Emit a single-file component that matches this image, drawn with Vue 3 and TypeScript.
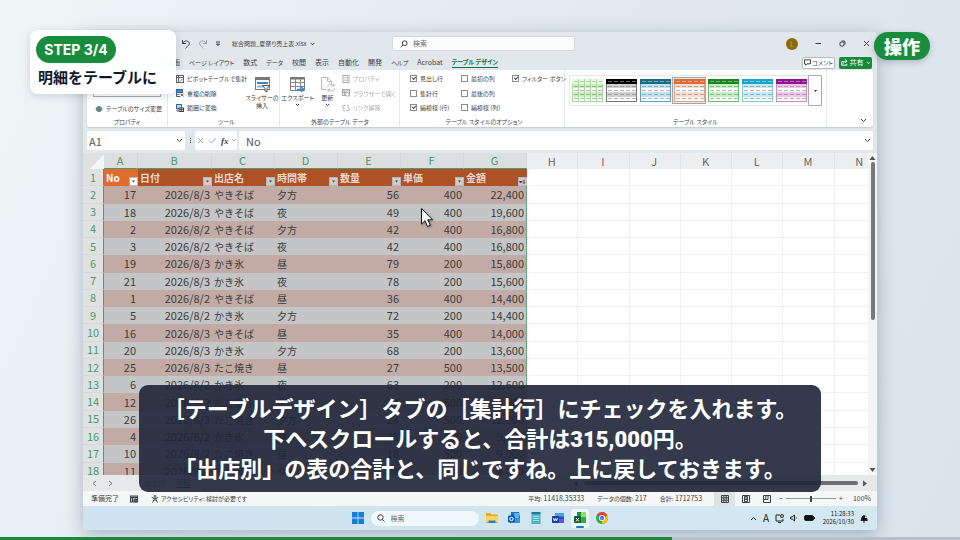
<script setup lang="ts">
import { ref } from 'vue'

interface Row {
  n: number
  no: number
  date: string
  shop: string
  slot: string
  qty: number
  price: number
  total: string
}

const tabs: { label: string; kana: boolean }[] = [
  { label: '描画', kana: false },
  { label: 'ページ レイアウト', kana: true },
  { label: '数式', kana: false },
  { label: 'データ', kana: true },
  { label: '校閲', kana: false },
  { label: '表示', kana: false },
  { label: '自動化', kana: false },
  { label: '開発', kana: false },
  { label: 'ヘルプ', kana: true },
  { label: 'Acrobat', kana: false },
]
const columns: string[] = ['A', 'B', 'C', 'D', 'E', 'F', 'G', 'H', 'I', 'J', 'K', 'L', 'M', 'N']
const headings: string[] = ['No', '日付', '出店名', '時間帯', '数量', '単価', '金額']
const emptyColumns: string[] = columns.slice(7)

const source: [number, string, string, string, number, number, string][] = [
  [17, '2026/8/3', 'やきそば', '夕方', 56, 400, '22,400'],
  [18, '2026/8/3', 'やきそば', '夜', 49, 400, '19,600'],
  [2, '2026/8/2', 'やきそば', '夕方', 42, 400, '16,800'],
  [3, '2026/8/2', 'やきそば', '夜', 42, 400, '16,800'],
  [19, '2026/8/3', 'かき氷', '昼', 79, 200, '15,800'],
  [21, '2026/8/3', 'かき氷', '夜', 78, 200, '15,600'],
  [1, '2026/8/2', 'やきそば', '昼', 36, 400, '14,400'],
  [5, '2026/8/2', 'かき氷', '夕方', 72, 200, '14,400'],
  [16, '2026/8/3', 'やきそば', '昼', 35, 400, '14,000'],
  [20, '2026/8/3', 'かき氷', '夕方', 68, 200, '13,600'],
  [25, '2026/8/3', 'たこ焼き', '昼', 27, 500, '13,500'],
  [6, '2026/8/2', 'かき氷', '夜', 63, 200, '12,600'],
  [12, '2026/8/2', 'たこ焼き', '夜', 24, 500, '12,000'],
  [26, '2026/8/3', 'たこ焼き', '夕方', 24, 500, '12,000'],
  [4, '2026/8/2', 'かき氷', '昼', 45, 200, '9,000'],
  [10, '2026/8/2', 'たこ焼き', '昼', 18, 500, '9,000'],
  [11, '2026/8/2', 'たこ焼き', '夕方', 18, 500, '9,000'],
]
const rows: Row[] = source.map(([no, date, shop, slot, qty, price, total], i) => ({
  n: i + 2, no, date, shop, slot, qty, price, total,
}))

const options = ref([
  { label: '見出し行', on: true },
  { label: '最初の列', on: false },
  { label: 'フィルター ボタン', on: true },
  { label: '集計行', on: false },
  { label: '最後の列', on: false },
  { label: '', on: false },
  { label: '縞模様 (行)', on: true },
  { label: '縞模様 (列)', on: false },
])

const swatches = [
  { name: '緑 淡色', head: '#e9f9e3', band: '#c9f0bd', line: '#a6d99a', grid: true, active: false },
  { name: '黒', head: '#000000', band: '#cfcfcf', line: '#777777', grid: false, active: false },
  { name: '青緑', head: '#1b6a86', band: '#bfe3ef', line: '#5d9fb5', grid: false, active: false },
  { name: 'オレンジ', head: '#dc6a34', band: '#f8dccf', line: '#dda68e', grid: false, active: true },
  { name: '緑', head: '#1d8221', band: '#bff0bf', line: '#6cbf6e', grid: false, active: false },
  { name: '水色', head: '#1ba5cc', band: '#c3eaf5', line: '#7fcbe0', grid: false, active: false },
  { name: '紫', head: '#92138f', band: '#ebc6ea', line: '#c98bc8', grid: false, active: false },
]

const cellName = ref('A1')
const formula = ref('No')
const query = ref('')
const taskQuery = ref('')
const zoom = ref(50)
</script>

<template>
  <main class="stage">
    <section class="window">
      <header class="titlebar">
        <div class="quick">
          <button aria-label="元に戻す"><svg width="10" height="10" viewBox="0 0 10 10"><path d="M1.5 1v3.5H5M1.5 4.5C3 2 6 1.200 7.700 2.900C9.500 4.800 7.500 6.500 4.500 9.300" /></svg></button>
          <button aria-label="やり直し" class="off"><svg width="10" height="10" viewBox="0 0 10 10"><path d="M8.500 1v3.500H5M8.500 4.500C7 2 4 1.200 2.300 2.900C.500 4.800 2.500 6.500 5.500 9.300" /></svg></button>
          <button aria-label="カスタマイズ"><svg width="6" height="6" viewBox="0 0 6 6"><path d="M1 1h4M1.500 3l1.500 1.700L4.500 3z" /></svg></button>
        </div>
        <button class="filename">総合問題_夏祭り売上表.xlsx <svg width="5" height="4" viewBox="0 0 5 4"><path d="M.5 .8l2 2 2-2" /></svg></button>
        <label class="search">
          <svg width="8" height="8" viewBox="0 0 8 8"><circle cx="4.700" cy="3.200" r="2.400" /><path d="M3 5L.7 7.300" /></svg>
          <input v-model="query" type="text" placeholder="検索" aria-label="検索">
        </label>
        <div class="controls">
          <span class="avatar">L</span>
          <button aria-label="最小化"><svg width="7" height="7" viewBox="0 0 7 7"><path d="M.5 3.500h5.500" /></svg></button>
          <button aria-label="元のサイズ"><svg width="7" height="7" viewBox="0 0 7 7"><rect x="1" y="2" width="4" height="4" rx="1" /><path d="M2.500 1h2.500q1 0 1 1v2.500" /></svg></button>
          <button aria-label="閉じる"><svg width="7" height="7" viewBox="0 0 7 7"><path d="M1 1l5 5M6 1L1 6" /></svg></button>
        </div>
      </header>

      <nav class="tabs">
        <button v-for="t in tabs" :key="t.label" :class="{ kana: t.kana }">{{ t.label }}</button>
        <button class="kana current">テーブル デザイン</button>
        <span class="share">
          <button class="comment"><svg width="7" height="7" viewBox="0 0 7 7"><path d="M.5 .8h6v4h-3.500L1.500 6.300V4.800h-1z" /></svg>コメント</button>
          <button class="sharing"><svg width="7" height="7" viewBox="0 0 7 7"><path d="M2.500 2.500H.8v3.700h5V4.800M2.500 4.500c.3-1.700 1.200-2.200 2.500-2.300M4.200 .7l1.900 1.500-1.900 1.600" /></svg>共有<svg width="5" height="4" viewBox="0 0 5 4"><path d="M1 1l1.500 1.500L4 1" /></svg></button>
        </span>
      </nav>

      <div class="ribbon">
        <section class="group g-prop">
          <div class="stack">
            <input class="tname" type="text" value="テーブル1" aria-label="テーブル名">
            <button class="cmd resize"><svg width="8" height="8" viewBox="0 0 8 8"><circle cx="4" cy="4" r="2.500" fill="#8fb3a4" stroke="#50756a" /><path d="M.5 4h7M4 1.500v5" stroke="#50756a" /></svg>テーブルのサイズ変更</button>
          </div>
          <h2>プロパティ</h2>
        </section>
        <section class="group g-tool">
          <div class="body">
            <div class="list">
              <button class="cmd"><svg width="8" height="8" viewBox="0 0 8 8"><rect x=".5" y=".5" width="7" height="7" fill="#fff" stroke="#666" /><path d="M.5 2.500h7M2.500 .5v7" stroke="#666" /><path d="M4 6.500l2.500-2.500" stroke="#2683c6" /></svg>ピボットテーブルで集計</button>
              <button class="cmd"><svg width="8" height="8" viewBox="0 0 8 8"><rect x=".5" y=".5" width="6" height="3" fill="#3d8fcc" stroke="#2c6d9e" /><path d="M.5 4v3.500h3.500M.5 5.500h3" stroke="#2c6d9e" /><path d="M4.500 4.500l3 3M7.500 4.500l-3 3" stroke="#d04a35" /></svg>重複の削除</button>
              <button class="cmd"><svg width="8" height="8" viewBox="0 0 8 8"><rect x=".5" y=".5" width="5" height="4" fill="#b7dbee" stroke="#2c6d9e" /><rect x="3" y="4" width="4.500" height="3.500" fill="#fff" stroke="#444" /><path d="M3 5.700h4.500M5.200 4v3.500M1 5.500v1.500h1" stroke="#444" /></svg>範囲に変換</button>
            </div>
            <button class="big"><svg width="17" height="17" viewBox="0 0 17 17"><rect x="1.500" y="1.500" width="14" height="12" fill="#fff" stroke="#777" /><path d="M1 3h15" stroke="#777" stroke-width="2" /><path d="M3 7h11" stroke="#2d8bd0" stroke-width="2" /><path d="M3 10.500h6" stroke="#7fbbe5" stroke-width="2" /><path d="M8.500 9.500h7l-2.500 3v3.500l-2-1v-2.500z" fill="#fff" stroke="#555" /></svg><span>スライサーの<br>挿入</span></button>
          </div>
          <h2>ツール</h2>
        </section>
        <section class="group g-ext">
          <div class="body">
            <button class="big"><svg width="17" height="17" viewBox="0 0 17 17"><path d="M1.500 1.500h14v13h-14z" fill="#fff" stroke="#777" /><path d="M1 2.500h15" stroke="#777" stroke-width="2" /><path d="M1 6.500h14M1 10.500h14M6.500 3v12M11.500 3v12" stroke="#888" /><path d="M8 13.500h6M12 11l3 2.500-3 2.500" stroke="#2d8bd0" stroke-width="1.500" /></svg>エクスポート<svg width="5" height="4" viewBox="0 0 5 4"><path d="M1 1l1.500 1.500L4 1" /></svg></button>
            <button class="big"><svg width="17" height="17" viewBox="0 0 17 17"><path d="M2.500 1.500h6l4 4v3M2.500 1v12.500h5M8.500 1.500v4h4" stroke="#bbb" fill="#f6f6f6" /><path d="M8.500 11a3.500 3.500 0 0 1 6.500-1M15.500 12a3.500 3.500 0 0 1-6.500 1.500M15 7.500V10h-2.500M9 16v-2.500h2.500" stroke="#bbb" /></svg>更新<svg width="5" height="4" viewBox="0 0 5 4"><path d="M1 1l1.500 1.500L4 1" /></svg></button>
            <div class="list off">
              <button class="cmd" disabled><svg width="8" height="8" viewBox="0 0 8 8"><rect x="1" y=".5" width="6" height="7" /><path d="M2.500 2.500h1M2.500 4h1M2.500 5.500h1M4.500 2.500h1.500M4.500 4h1.500M4.500 5.500h1.500" /></svg>プロパティ</button>
              <button class="cmd" disabled><svg width="8" height="8" viewBox="0 0 8 8"><rect x=".5" y=".5" width="7" height="6" /><path d="M.5 2h7M.5 3.500h4M2.500 2v4.500" /><circle cx="5.500" cy="5.500" r="1.800" fill="#fff" /></svg>ブラウザーで開く</button>
              <button class="cmd" disabled><svg width="8" height="8" viewBox="0 0 8 8"><path d="M3.500 1.500h-2l-1 1.500 1 1.500h1M4.500 6.500h2l1-1.500-1-1.500h-1M5 1l2 1M1 6l2 1" /></svg>リンク解除</button>
            </div>
          </div>
          <h2>外部のテーブル データ</h2>
        </section>
        <section class="group g-opt">
          <div class="checks">
            <template v-for="(o, i) in options" :key="i">
              <label v-if="o.label"><input v-model="o.on" type="checkbox">{{ o.label }}</label>
              <span v-else></span>
            </template>
          </div>
          <h2>テーブル スタイルのオプション</h2>
        </section>
        <section class="group g-style">
          <div class="gallery">
            <button v-for="s in swatches" :key="s.name" class="swatch" :class="{ active: s.active }" :aria-label="s.name">
              <svg width="31" height="23" viewBox="0 0 31 23">
                <rect width="31" height="23" fill="#fff" />
                <rect width="31" height="5" :fill="s.head" />
                <rect y="5" width="31" height="4" :fill="s.band" />
                <rect y="13" width="31" height="5" :fill="s.band" />
                <path v-if="s.grid" d="M6.500 0v23M12.500 0v23M18.500 0v23M24.500 0v23" :stroke="s.line" />
                <path d="M0 22.500h31M.5 5v18M30.500 5v18" :stroke="s.line" />
                <path d="M2 7.500h28M2 11.500h28M2 15.500h28M2 19.500h28" stroke="#777" stroke-dasharray="4 2" opacity=".55" />
                <path d="M2 2.500h28" :stroke="s.grid ? '#777' : '#fff'" stroke-dasharray="4 2" opacity=".4" />
              </svg>
            </button>
            <button class="more" aria-label="その他"><svg width="5" height="4" viewBox="0 0 5 4"><path d="M1.500 1.500h2L2.500 2.500z" /></svg></button>
          </div>
          <h2>テーブル スタイル</h2>
        </section>
        <button class="collapse" aria-label="リボンを折りたたむ"><svg width="7" height="5" viewBox="0 0 7 5"><path d="M1 1l2.500 2.500L6 1" /></svg></button>
      </div>

      <div class="formulabar">
        <label class="namebox"><input v-model="cellName" type="text" aria-label="名前ボックス"><svg width="7" height="5" viewBox="0 0 7 5"><path d="M1 1l2.500 2.500L6 1" /></svg></label>
        <span class="dots"><i></i><i></i><i></i></span>
        <span class="fx">
          <svg width="7" height="7" viewBox="0 0 7 7" class="dim"><path d="M1 1l5 5M6 1L1 6" /></svg>
          <svg width="9" height="7" viewBox="0 0 9 7" class="dim"><path d="M1 3.500L3.500 6 8 1" /></svg>
          <em>fx</em>
          <svg width="6" height="5" viewBox="0 0 6 5" class="dim"><path d="M1 1l2 2 2-2" /></svg>
        </span>
        <label class="formula"><input v-model="formula" type="text" aria-label="数式バー"><svg width="7" height="5" viewBox="0 0 7 5"><path d="M1 1l2.500 2.500L6 1" /></svg></label>
      </div>

      <div class="sheet">
        <div class="cells">
          <table>
            <colgroup>
              <col class="c-head"><col class="c-no"><col class="c-date">
              <col v-for="k in 5" :key="k" class="c-data">
              <col v-for="k in emptyColumns" :key="k" class="c-empty">
            </colgroup>
            <thead>
              <tr>
                <th class="corner"></th>
                <th v-for="(c, i) in columns" :key="c" class="colhead" :class="{ sel: i < 7 }">{{ c }}</th>
              </tr>
            </thead>
            <tbody>
              <tr class="heading">
                <th class="rowhead">1</th>
                <th v-for="(h, i) in headings" :key="h" class="field" :class="{ first: i === 0 }">
                  <div><span>{{ h }}</span><button :aria-label="h + 'のフィルター'"><svg width="7" height="7" viewBox="0 0 7 7"><path v-if="i < 6" d="M2 2.500h3L3.500 4.500z" fill="#444" stroke="none" /><path v-else d="M.5 3.500h2.500L1.700 5zM5 1.500v4M4 4.500l1 1 1-1" /></svg></button></div>
                </th>
                <td v-for="c in emptyColumns" :key="c" class="blank"></td>
              </tr>
              <tr v-for="r in rows" :key="r.n" :class="{ band: r.n % 2 === 0 }">
                <th class="rowhead">{{ r.n }}</th>
                <td class="num">{{ r.no }}</td>
                <td class="num">{{ r.date }}</td>
                <td>{{ r.shop }}</td>
                <td>{{ r.slot }}</td>
                <td class="num">{{ r.qty }}</td>
                <td class="num">{{ r.price }}</td>
                <td class="num last">{{ r.total }}</td>
                <td v-for="c in emptyColumns" :key="c" class="blank"></td>
              </tr>
            </tbody>
          </table>
        </div>
        <div class="vscroll">
          <svg width="7" height="6" viewBox="0 0 7 6"><path d="M.5 5h6L3.500 1z" /></svg>
          <i></i>
          <svg width="7" height="6" viewBox="0 0 7 6"><path d="M.5 1h6L3.500 5z" /></svg>
        </div>
      </div>

      <div class="sheetbar">
        <svg width="5" height="7" viewBox="0 0 5 7"><path d="M4 1L1 3.500 4 6" /></svg>
        <svg width="5" height="7" viewBox="0 0 5 7"><path d="M1 1l3 2.500L1 6" /></svg>
        <button>出店別</button>
        <button class="current">明細</button>
        <div class="hscroll">
          <svg width="6" height="7" viewBox="0 0 6 7"><path d="M5 .5v6L1 3.500z" /></svg>
          <i></i>
          <svg width="6" height="7" viewBox="0 0 6 7"><path d="M1 .5v6L5 3.500z" /></svg>
        </div>
      </div>

      <footer class="status">
        <span class="ready">準備完了</span>
        <svg width="8" height="8" viewBox="0 0 8 8"><rect x=".5" y="1" width="7" height="6" fill="#bbb" /><path d="M.5 2.500h7M2.500 2.500V7M4 5h3.500" /><circle cx="5.500" cy="5.500" r="1.500" fill="#666" /></svg>
        <span class="access"><svg width="8" height="8" viewBox="0 0 8 8"><circle cx="4" cy="1.200" r=".8" /><path d="M.8 2.500L3 3.200v1.600L1.500 7.500M7.200 2.500L5 3.200v1.600l1.500 2.700M3 3.200h2M3 5h2" /></svg>アクセシビリティ: 検討が必要です</span>
        <span class="sums"><span><small>平均:</small> 11418.35333</span><span><small>データの個数:</small> 217</span><span><small>合計:</small> 1712753</span></span>
        <span class="views">
          <button class="current" aria-label="標準"><svg width="8" height="8" viewBox="0 0 8 8"><path d="M.5 .5h7v7h-7zM.5 2.800h7M.5 5.200h7M2.800 .5v7M5.200 .5v7" /></svg></button>
          <button aria-label="ページ レイアウト"><svg width="8" height="8" viewBox="0 0 8 8"><path d="M.5 .5h7v7h-7zM2.500 1.500h3v5h-3zM3 3h2M3 4.500h2" /></svg></button>
          <button aria-label="改ページ プレビュー"><svg width="8" height="8" viewBox="0 0 8 8"><path d="M.5 .5h7v7h-7zM.5 4.500H5V.5M2.800 .5v4" /></svg></button>
        </span>
        <span class="zoom"><button aria-label="縮小">−</button><input v-model="zoom" type="range" aria-label="ズーム"><button aria-label="拡大">+</button></span>
        <span class="percent">100%</span>
      </footer>

      <div class="taskbar">
        <div class="apps">
          <button aria-label="スタート"><svg width="12" height="12" viewBox="0 0 12 12"><path d="M0 0h5.600v5.600H0zM6.400 0H12v5.600H6.400zM0 6.400h5.600V12H0zM6.400 6.400H12V12H6.400z" fill="#1680d8" stroke="none" /></svg></button>
          <label class="tasksearch"><svg width="8" height="8" viewBox="0 0 8 8"><circle cx="3.500" cy="3.500" r="2.700" /><path d="M5.500 5.500L7.500 7.500" /></svg><input v-model="taskQuery" type="text" placeholder="検索" aria-label="タスクバー検索"></label>
          <button class="app" aria-label="エクスプローラー"><svg width="12" height="12" viewBox="0 0 12 12"><path d="M0 1h4.500l1 1.500H12V11H0z" fill="#e9a81f" /><path d="M0 4h12v6H0z" fill="#fbd45c" /><path d="M2.500 8.500h7V11h-7z" fill="#2a7fd0" /></svg></button>
          <button class="app" aria-label="Outlook"><svg width="12" height="12" viewBox="0 0 12 12"><path d="M3 0h8l1 5v6H2z" fill="#1c6fc0" /><path d="M6 1h5v5H6z" fill="#57b7ee" /><path d="M3 7l9-1v5H3z" fill="#2d9be3" /><rect y="3.500" width="7" height="7" rx="1" fill="#0f5fae" /><circle cx="3.500" cy="7" r="1.700" fill="none" stroke="#fff" /></svg></button>
          <button class="app" aria-label="メモ帳"><svg width="12" height="12" viewBox="0 0 12 12"><path d="M1.500 1h9v11h-9z" fill="#49b4c4" /><path d="M1.500 0h9v2h-9z" fill="#25788e" /><path d="M3 4.500h6M3 6.500h6M3 8.500h6" stroke="#a5e3e8" /></svg></button>
          <button class="app" aria-label="Word"><svg width="12" height="12" viewBox="0 0 12 12"><path d="M3 1h9v10H3z" fill="#1c54c4" /><path d="M3 1h9v3.500H3z" fill="#4aa1f0" /><path d="M7 7h5v4H7z" fill="#6a4ee0" /><rect y="4" width="7" height="7" rx="1" fill="#123f9f" /><path d="M1.500 6l1 3 1-2.500 1 2.500 1-3" fill="none" stroke="#fff" /></svg></button>
          <button class="app running" aria-label="Excel"><svg width="12" height="12" viewBox="0 0 12 12"><path d="M3 0h9v11H3z" fill="#1d8d3f" /><path d="M7 0h5v5H7z" fill="#8fdc60" /><path d="M7 5h5v6H7z" fill="#2dac52" /><rect y="4" width="7" height="7" rx="1" fill="#0c6030" /><path d="M2 6l3 3.500M5 6L2 9.500" stroke="#fff" /></svg></button>
          <button class="app" aria-label="Chrome"><svg width="12" height="12" viewBox="0 0 12 12"><circle cx="6" cy="6" r="6" fill="#34a853" /><path d="M6 6L.8 3A6 6 0 0 1 11.200 3z" fill="#ea4335" /><path d="M6 6l5.200-3A6 6 0 0 1 6 12z" fill="#fbbc04" /><path d="M3.500 3h7.700l-2 2z" fill="#ea4335" /><circle cx="6" cy="6" r="2.900" fill="#fff" /><circle cx="6" cy="6" r="2.200" fill="#4285f4" /></svg></button>
        </div>
        <div class="tray">
          <svg width="7" height="5" viewBox="0 0 7 5"><path d="M1 4l2.500-2.500L6 4" /></svg>
          <span class="ime">A</span>
          <svg width="9" height="9" viewBox="0 0 9 9"><path d="M5 1H1v6h7V5M3 8.500h3" /><circle cx="7" cy="2" r="1.500" /></svg>
          <svg width="8" height="8" viewBox="0 0 8 8"><path d="M.7 3h1.500L4.500 1v6L2.200 5H.7z" /><path d="M6 3q1 1 0 2" opacity=".5" /></svg>
          <svg width="11" height="6" viewBox="0 0 11 6"><rect x=".5" y=".5" width="9" height="5" rx="1.500" fill="#111" /><path d="M10.500 2v2" /></svg>
          <time>11:28:33<br>2026/10/30</time>
          <svg width="8" height="9" viewBox="0 0 8 9"><path d="M1 6.500C2 5 1.500 1.500 4.200 1.500S6.500 5 7.300 6.500zM3 8h2" fill="#111" /><path d="M4.500 1h2.500L5 3.500h2.500" stroke="#d3e7f1" /></svg>
        </div>
      </div>
    </section>

    <svg class="pointer" width="16" height="22" viewBox="0 0 16 22"><path d="M1.500 1.500v15.500l3.500-3.300 2.500 5.800 2.800-1.200-2.500-5.500h4.700z" /></svg>

    <aside class="step">
      <span>STEP 3/4</span>
      <strong>明細をテーブルに</strong>
    </aside>
    <aside class="mode">操作</aside>
    <p class="caption">［テーブルデザイン］タブの［集計行］にチェックを入れます。<br>下へスクロールすると、合計は<b>315,000</b>円。<br>「出店別」の表の合計と、同じですね。上に戻しておきます。</p>
    <div class="progress"><i></i></div>
  </main>
</template>

<style>
body { margin: 0; }
</style>

<style scoped>
* { box-sizing: border-box; }
.stage {
  position: relative;
  display: flex;
  flex-direction: column;
  min-height: 100vh;
  padding: 32px 83px 10px;
  overflow: hidden;
  background: linear-gradient(115deg, #f0f5f7 0%, #e3eaf0 45%, #dae4ed 100%);
  font-family: "Noto Sans CJK JP", "Noto Sans", sans-serif;
  font-size: 7px;
  line-height: 9px;
  color: #3d4144;
}
button, input {
  font: inherit;
  color: inherit;
  background: none;
  border: 0;
  padding: 0;
  margin: 0;
  outline: 0;
  min-width: 0;
}
button { white-space: nowrap; }
svg { display: block; flex: none; fill: none; stroke: currentColor; stroke-width: 1; }
.window {
  flex: 1;
  display: flex;
  flex-direction: column;
  overflow: hidden;
  border-radius: 4px;
  background: #e2e7eb;
  box-shadow: 0 4px 18px rgba(50, 70, 95, .35);
}
.titlebar {
  display: flex;
  align-items: center;
  height: 23px;
  padding: 0 7px 0 98px;
  font-feature-settings: "palt";
}
.quick { display: flex; align-items: center; gap: 7px; width: 51px; }
.off, .dim { opacity: .45; }
.filename { display: flex; align-items: center; gap: 3px; width: 160px; font-size: 6px; }
.search {
  display: flex;
  align-items: center;
  gap: 5px;
  flex: 0 1 183px;
  height: 15px;
  padding: 0 7px;
  background: #fbfcfc;
  border: 1px solid #d3d9dd;
  border-radius: 2px;
}
.search input { flex: 1; }
input::placeholder { color: #666; opacity: 1; }
.controls { display: flex; align-items: center; gap: 17px; margin-left: auto; }
.avatar {
  width: 12px;
  height: 12px;
  border-radius: 50%;
  background: #8d6b0d;
  color: #c7a650;
  text-align: center;
  line-height: 12px;
}
.tabs {
  display: flex;
  align-items: center;
  gap: 9px;
  height: 15px;
  padding: 0 5px 0 83px;
  font-feature-settings: "palt";
}
.tabs .kana { font-size: 6px; }
.tabs > .current { color: #127443; font-weight: 700; border-bottom: 1px solid #127443; line-height: 10px; }
.share { display: flex; gap: 4px; margin-left: auto; }
.share button { display: flex; align-items: center; justify-content: center; gap: 2px; width: 33px; height: 12px; border-radius: 2px; }
.share .comment { background: #fff; border: 1px solid #b6babd; font-size: 6px; gap: 1px; }
.sharing { background: #168a3c; color: #fff; }
.ribbon {
  display: flex;
  height: 57px;
  margin: 0 4px;
  background: #fff;
  border-radius: 3px;
  box-shadow: 0 1px 1px #c9ced2;
  font-feature-settings: "palt";
}
.group { display: flex; flex-direction: column; justify-content: space-between; padding: 4px 6px 1px; border-right: 1px solid #e6e8ea; }
.group h2 { margin: 0; font-size: 6px; line-height: 8px; font-weight: 400; text-align: center; }
.g-prop { width: 81px; }
.g-tool { width: 112px; padding-left: 8px; padding-right: 2px; }
.g-ext { width: 120px; padding-left: 3px; padding-right: 2px; }
.g-opt { width: 165px; padding-left: 10px; }
.g-style { width: 262px; padding-left: 4px; padding-right: 4px; }
.stack { display: flex; flex-direction: column; justify-content: space-between; height: 39px; padding-top: 10px; }
.tname { height: 13px; border: 1px solid #aaa; padding: 0 6px; font-size: 6px; }
.resize { padding-left: 2px; }
.cmd { display: flex; align-items: center; gap: 3px; height: 9px; font-size: 6px; }
.body { display: flex; justify-content: space-between; height: 39px; }
.list { display: flex; flex-direction: column; justify-content: space-between; width: 56px; height: 38px; }
.big { display: flex; flex-direction: column; align-items: center; width: 30px; font-size: 6px; line-height: 8px; padding-top: 2px; gap: 1px; }
.checks { display: grid; grid-template-columns: 51px 51px auto; justify-content: start; align-content: space-between; height: 38px; }
.checks label { display: flex; align-items: center; gap: 3px; height: 9px; font-size: 6px; white-space: nowrap; }
.checks input { appearance: none; flex: none; width: 7px; height: 7px; border: 1px solid #8a8d90; position: relative; }
.checks input:checked::after {
  content: "";
  position: absolute;
  left: 1px;
  top: 0;
  width: 3px;
  height: 2px;
  border: solid #444;
  border-width: 0 0 1px 1px;
  transform: rotate(-45deg);
}
.gallery { display: flex; align-items: center; height: 31px; margin-top: 1px; border: 1px solid #e6eae7; border-right: 0; }
.swatch { display: grid; place-items: center; width: 34px; height: 27px; border: 1px solid transparent; }
.swatch svg, .app svg { stroke: none; }
.swatch.active { border-color: #a5a5a5; background: #e7e7e7; }
.more { display: grid; place-items: center; width: 14px; height: 31px; margin-left: auto; border: 1px solid #aaa; border-radius: 1px; }
.collapse { display: block; align-self: flex-end; margin: 0 6px 4px auto; }
.formulabar { display: flex; height: 19px; margin: 4px 4px 3px; }
.formulabar label { display: flex; align-items: center; background: #fff; border-radius: 2px; padding: 0 2px; }
.formulabar input { flex: 1; font-size: 11px; line-height: 14px; color: #555; }
.namebox { width: 98px; }
.dots { display: flex; flex-direction: column; justify-content: center; align-items: center; gap: 1px; width: 10px; }
.dots i { width: 1px; height: 1px; background: #444; }
.fx { display: flex; align-items: center; gap: 4px; width: 42px; padding-left: 2px; background: #fff; border-radius: 2px; }
.fx em { font: italic 700 9px/12px "Liberation Serif", serif; }
.fx svg:last-child { margin-left: -2px; }
.formulabar .formula { flex: 1; margin-left: 2px; padding-left: 7px; }
.sheet { display: flex; height: 322px; overflow: hidden; background: #f3f4f5; }
.cells { flex: 1; min-width: 0; overflow: hidden; background: #fff; }
table { width: 803px; height: 327px; table-layout: fixed; border-collapse: separate; border-spacing: 0; }
.c-head { width: 21px; }
.c-no { width: 34px; }
.c-date { width: 74px; }
.c-data { width: 63px; }
.c-empty { width: auto; }
th, td { padding: 0 3px 0 2px; overflow: hidden; text-align: left; white-space: nowrap; font-size: 10px; line-height: 15px; font-weight: 400; }
.corner { background: linear-gradient(135deg, #dfe2e2 60%, #f5f7f7 60%); }
.colhead { text-align: center; color: #666; background: #eceeef; border-right: 1px solid #e0e2e3; font-size: 11px; }
.colhead.sel { color: #459667; background: #dcdfdf; border-bottom: 1px solid #4a9c6c; border-right-color: #d3d7d6; }
.rowhead { padding: 0; text-align: center; color: #4b9a6c; background: #dfe2e1; border-right: 1px solid #45a06a; border-bottom: 1px solid #d5d9d7; font-size: 11px; }
td { background: #c4c5c6; color: #3b3b3b; }
.band td { background: #c2aba5; }
.num { text-align: right; font-size: 11px; padding-right: 2px; }
.last { border-right: 1px solid #62a87f; }
tr .blank { background: #fff; border-right: 1px solid #f1f2f2; border-bottom: 1px solid #eff0f0; }
.field { background: #ae5127; color: #e9d9d1; font-weight: 700; padding: 0; }
.field.first { background: #df6b31; color: #fff; }
.field div { display: flex; justify-content: space-between; align-items: flex-end; height: 16px; padding-left: 2px; }
.field span { line-height: 16px; }
.field button { display: grid; place-items: center; width: 9px; height: 9px; background: #cdcdcd; border: 1px solid #b7b7b7; color: #444; }
.field.first button { background: #fff; }
.vscroll { display: flex; flex-direction: column; align-items: center; gap: 1px; width: 9px; padding: 2px 0; color: #555; }
.vscroll svg, .hscroll svg { fill: #555; stroke: none; }
.vscroll i { width: 4px; height: 158px; border-radius: 2px; background: #77797b; margin-bottom: auto; }
.sheetbar { display: flex; align-items: center; gap: 11px; height: 16px; padding: 0 9px; background: #e5e9ea; color: #777; }
.sheetbar .current { color: #127443; border-bottom: 1px solid #127443; }
.sheetbar button:first-of-type { margin-left: 20px; }
.hscroll { display: flex; align-items: center; justify-content: space-between; flex: 0 1 295px; margin-left: auto; }
.hscroll i { width: 274px; height: 4px; border-radius: 2px; background: #6d6f71; }
.status { display: flex; align-items: center; height: 15px; padding: 0 6px 0 8px; background: #f5f7f7; font-feature-settings: "palt"; }
.ready { width: 39px; }
.access { display: flex; align-items: center; gap: 2px; margin-left: 13px; font-size: 6px; }
.sums { display: flex; gap: 13px; margin-left: auto; }
.sums small { font-size: 6px; }
.views { display: flex; margin-left: 12px; }
.views button { display: grid; place-items: center; width: 21px; height: 15px; }
.views .current { background: #dfe2e3; }
.zoom { display: flex; align-items: center; gap: 3px; margin: 0 10px 0 2px; }
.zoom input { appearance: none; width: 50px; height: 9px; background: linear-gradient(#999, #999) center / 100% 1px no-repeat; }
.zoom input::-webkit-slider-thumb { appearance: none; width: 2px; height: 6px; background: #444; }
.taskbar { display: grid; grid-template-columns: 1fr auto 1fr; align-items: center; flex: 1; min-height: 24px; background: linear-gradient(90deg, #cfe3f0, #d3e8f1); }
.apps { grid-column: 2; display: flex; align-items: center; gap: 4px; padding-left: 2px; }
.app { position: relative; display: grid; place-items: center; width: 18px; height: 19px; border-radius: 2px; }
.running { background: #edf5f9; }
.running::after { content: ""; position: absolute; left: 5px; bottom: 0; width: 8px; height: 2px; border-radius: 1px; background: #1d79c0; }
.tasksearch { display: flex; align-items: center; gap: 6px; width: 108px; height: 15px; margin: 0 0 0 3px; padding: 0 6px; border-radius: 8px; background: #f1f8fb; }
.tray { justify-self: end; display: flex; align-items: center; gap: 6px; padding-right: 9px; color: #222; }
.ime { font-size: 10px; line-height: 12px; }
time { font-size: 6px; line-height: 8px; text-align: right; width: 33px; }
.pointer { position: absolute; left: 420px; top: 207px; fill: #fff; stroke: #111; filter: drop-shadow(1px 1px 1px rgba(0, 0, 0, .3)); }
.step {
  position: absolute;
  left: 30px;
  top: 30px;
  display: flex;
  flex-direction: column;
  align-items: flex-start;
  gap: 3px;
  width: 146px;
  height: 64px;
  padding: 6px 8px;
  border-radius: 8px;
  background: rgba(255, 255, 255, .97);
  box-shadow: 0 2px 8px rgba(50, 70, 95, .2);
  color: #12182b;
}
.step span {
  width: 80px;
  margin-left: -2px;
  border-radius: 14px;
  background: #1a8c3e;
  color: #fff;
  text-align: center;
  font: 700 14px/27px Inter, "Noto Sans CJK JP", sans-serif;
}
.step strong { font-size: 15px; line-height: 21px; white-space: nowrap; font-weight: 700; }
.mode {
  position: absolute;
  right: 30px;
  top: 32px;
  width: 56px;
  border-radius: 14px;
  background: #1a8c3e;
  color: #fff;
  text-align: center;
  font-size: 18px;
  line-height: 28px;
  font-weight: 900;
  box-shadow: 0 2px 6px rgba(50, 70, 95, .3);
}
.caption {
  position: absolute;
  left: 139px;
  right: 139px;
  bottom: 48px;
  margin: 0;
  padding: 7px 0 10px;
  border-radius: 9px;
  background: rgba(32, 38, 57, .91);
  color: #fff;
  text-align: center;
  font-size: 22px;
  line-height: 30px;
  font-weight: 700;
  white-space: nowrap;
}
.caption b { font-family: "Liberation Sans Narrow", Roboto, sans-serif; line-height: 20px; }
.progress { position: absolute; left: 0; right: 0; bottom: 0; height: 3px; background: #b5c0cb; }
.progress i { display: block; width: 70%; height: 100%; background: #188a3f; }
</style>
